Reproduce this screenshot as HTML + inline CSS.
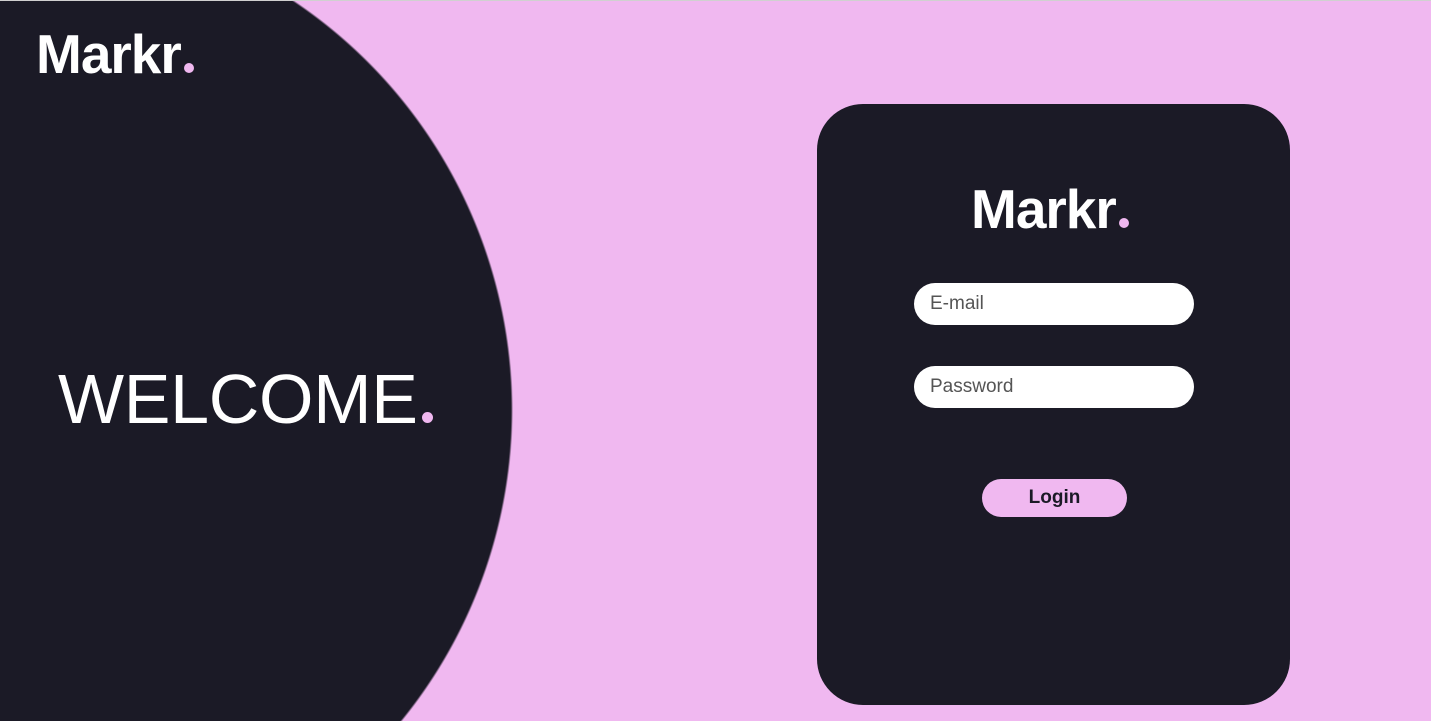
<!DOCTYPE html>
<html><head><meta charset="utf-8"><style>
html,body{margin:0;padding:0;width:1431px;height:721px;overflow:hidden;background:#f0b8f0;font-family:"Liberation Sans",sans-serif}
.wrap{position:relative;width:1431px;height:721px;overflow:hidden;background:radial-gradient(circle 493px at 20px 410px,#1b1a26 99.6%,#f0b8f0 100%)}
.topline{position:absolute;left:0;top:0;width:1431px;height:1px;background:#d0d0d0;z-index:5}
.logo{position:absolute;color:#fff;font-weight:bold;font-size:55px;letter-spacing:-1px;line-height:1}
.dot{display:inline-block;width:10px;height:10px;border-radius:50%;background:#f0b8f0;margin-left:3px}
.welcome{position:absolute;left:58px;top:364px;color:#fff;font-size:70px;letter-spacing:-0.3px;line-height:1}
.wdot{display:inline-block;width:11px;height:11px;border-radius:50%;background:#f0b8f0;margin-left:4px}
.card{position:absolute;left:817px;top:104px;width:473px;height:601px;border-radius:46px;background:#1b1a26}
.input{position:absolute;left:914px;width:280px;height:42px;border-radius:21px;background:#fff;box-sizing:border-box;padding-left:16px;line-height:42px;font-size:19px;color:#555}
.btn{position:absolute;left:982px;top:479px;width:145px;height:38px;border-radius:19px;background:#f0b8f0;text-align:center;line-height:38px;font-size:19px;font-weight:bold;color:#1b1a26}
</style></head><body><div class="wrap">
<div class="topline"></div>
<div class="logo" style="left:36px;top:27px">Markr<span class="dot"></span></div>
<div class="welcome">WELCOME<span class="wdot"></span></div>
<div class="card"></div>
<div class="logo" style="left:971px;top:182px">Markr<span class="dot"></span></div>
<div class="input" style="top:283px">E-mail</div>
<div class="input" style="top:366px">Password</div>
<div class="btn">Login</div>
</div></body></html>
